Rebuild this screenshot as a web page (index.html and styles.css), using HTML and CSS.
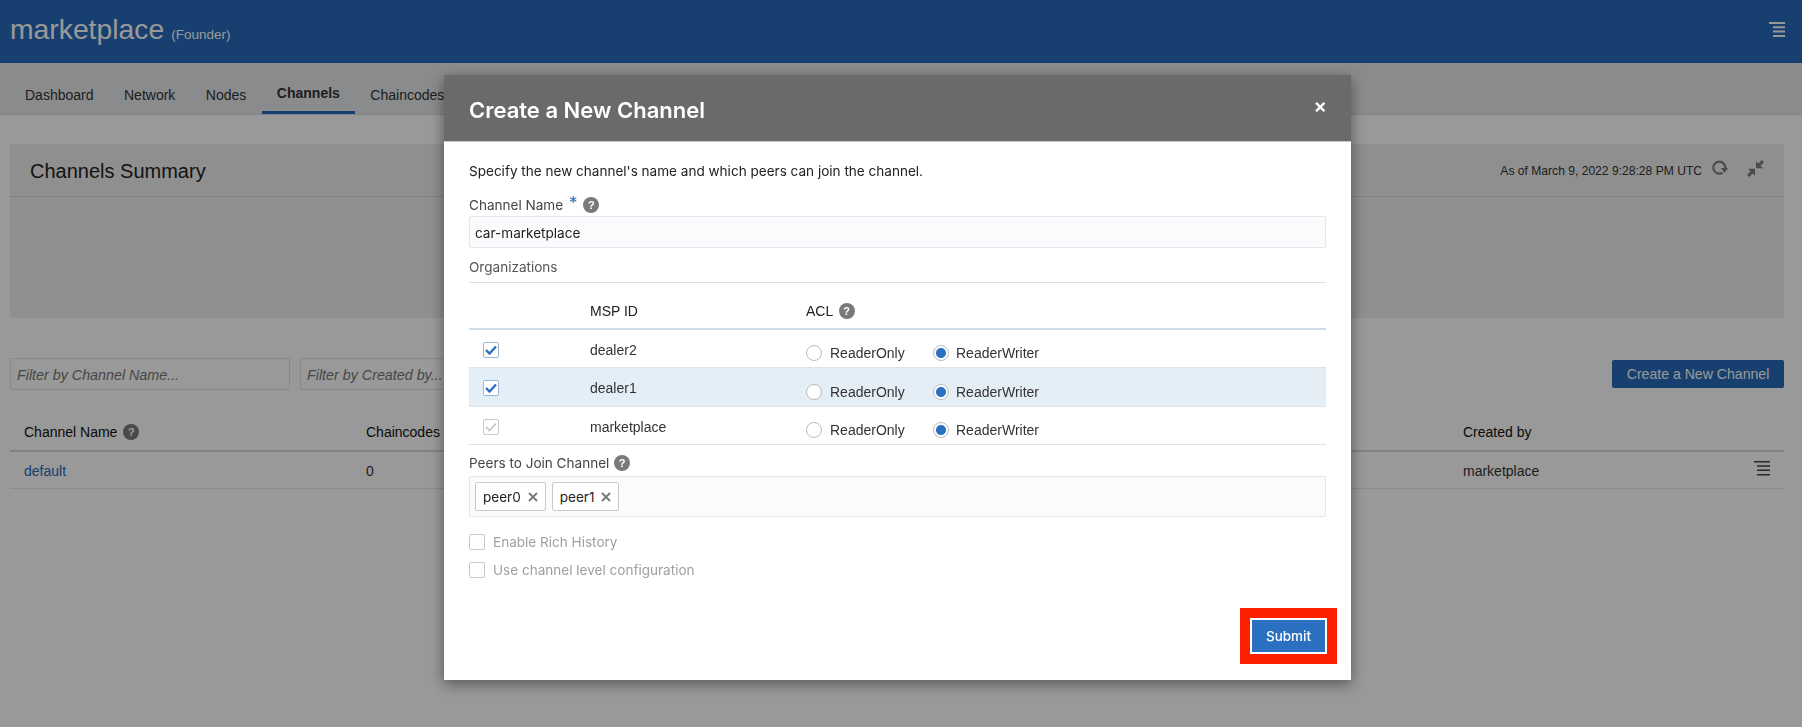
FILE: index.html
```html
<!DOCTYPE html>
<html lang="en">
<head>
  <meta charset="UTF-8">
  <title>Channels</title>
  <link rel="stylesheet" href="styles.css">
</head>
<body>
  <header class="topbar">
    <div class="brand"><span class="brand-name">marketplace</span><span class="brand-role">(Founder)</span></div>
    <svg class="menu-icon" width="16" height="15" viewBox="0 0 16 15"><path d="M0 0h16v2H0zM4 4.300h12v2H4zM4 8.600h12v2H4zM4 12.900h12v2H4z" fill="#fff"/></svg>
  </header>

  <nav class="tabs">
    <a class="tab">Dashboard</a>
    <a class="tab">Network</a>
    <a class="tab">Nodes</a>
    <a class="tab active">Channels</a>
    <a class="tab">Chaincodes</a>
  </nav>

  <main class="content">
    <section class="panel">
      <div class="panel-head">
        <h2>Channels Summary</h2>
        <div class="panel-tools">
          <span class="stamp">As of March 9, 2022 9:28:28 PM UTC</span>
          <svg width="17" height="17" viewBox="0 0 17 17"><path d="M14 9.500A6 6 0 1 0 11.500 12.700M3 3.200" fill="none" stroke="#7a7d82" stroke-width="2.200"/><path d="M17 8h-7l3.500 5z" fill="#7a7d82"/></svg>
          <svg class="tool-gap" width="17" height="17" viewBox="0 0 17 17"><path d="M14.800 0L17 2.200l-3.500 3.500L16 8.200H9V1.200l2.300 2.300zM2.200 17L0 14.800l3.500-3.500L1 8.800h7v7l-2.300-2.300z" fill="#7a7d82"/></svg>
        </div>
      </div>
    </section>

    <div class="filters">
      <div class="filter">Filter by Channel Name...</div>
      <div class="filter">Filter by Created by...</div>
      <button class="create-btn">Create a New Channel</button>
    </div>

    <div class="grid-row grid-head">
      <span>Channel Name <i class="help">?</i></span>
      <span>Chaincodes</span>
      <span>Created by</span>
    </div>
    <div class="grid-row grid-body">
      <a class="link">default</a>
      <span>0</span>
      <span>marketplace</span>
      <svg class="row-menu" width="16" height="15" viewBox="0 0 16 15"><path d="M0 0h16v1.500H0zM3 4.300h13v1.500H3zM3 8.600h13v1.500H3zM3 12.900h13v1.500H3z" fill="#444"/></svg>
    </div>
  </main>

  <div class="backdrop"></div>

  <div class="modal">
    <div class="modal-head">
      <h1>Create a New Channel</h1>
      <span class="close">&times;</span>
    </div>
    <div class="modal-body">
      <p class="intro">Specify the new channel's name and which peers can join the channel.</p>
      <label class="field-label">Channel Name <b class="req">*</b> <i class="help">?</i></label>
      <div class="text-input">car-marketplace</div>
      <div class="section-title">Organizations</div>

      <div class="org-row org-head">
        <span></span>
        <span>MSP ID</span>
        <span>ACL <i class="help">?</i></span>
      </div>
      <div class="org-row">
        <span class="check on"><svg width="12" height="10" viewBox="0 0 12 10"><path d="M1 5l3.500 3.500L11 1.500" fill="none" stroke="#2a6fc0" stroke-width="2.400"/></svg></span>
        <span class="msp">dealer2</span>
        <span class="acl">
          <span class="radio"></span><span class="radio-label">ReaderOnly</span>
          <span class="radio on"></span><span>ReaderWriter</span>
        </span>
      </div>
      <div class="org-row selected">
        <span class="check on"><svg width="12" height="10" viewBox="0 0 12 10"><path d="M1 5l3.500 3.500L11 1.500" fill="none" stroke="#2a6fc0" stroke-width="2.400"/></svg></span>
        <span class="msp">dealer1</span>
        <span class="acl">
          <span class="radio"></span><span class="radio-label">ReaderOnly</span>
          <span class="radio on"></span><span>ReaderWriter</span>
        </span>
      </div>
      <div class="org-row">
        <span class="check"><svg width="12" height="10" viewBox="0 0 12 10"><path d="M1 5l3.500 3.500L11 1.500" fill="none" stroke="#c4c4c4" stroke-width="1.600"/></svg></span>
        <span class="msp">marketplace</span>
        <span class="acl">
          <span class="radio"></span><span class="radio-label">ReaderOnly</span>
          <span class="radio on"></span><span>ReaderWriter</span>
        </span>
      </div>

      <label class="field-label peers-label">Peers to Join Channel <i class="help">?</i></label>
      <div class="tag-input">
        <span class="tag">peer0 <svg width="10" height="10" viewBox="0 0 10 10"><path d="M1 1l8 8M9 1l-8 8" stroke="#777" stroke-width="1.800"/></svg></span>
        <span class="tag">peer1 <svg width="10" height="10" viewBox="0 0 10 10"><path d="M1 1l8 8M9 1l-8 8" stroke="#777" stroke-width="1.800"/></svg></span>
      </div>

      <div class="option"><span class="check"></span>Enable Rich History</div>
      <div class="option"><span class="check"></span>Use channel level configuration</div>

      <div class="modal-foot">
        <span class="highlight"><button class="submit">Submit</button></span>
      </div>
    </div>
  </div>
</body>
</html>
```

FILE: styles.css
```css
* {
  box-sizing: border-box;
}
html, body {
  height: 727px;
  overflow: hidden;
}
body {
  margin: 0;
  background: #fff;
  color: #333;
  font-family: "Liberation Sans", Arial, sans-serif;
  font-size: 14px;
}

/* page behind the dialog */
.topbar {
  height: 63px;
  background: #2769b9;
  color: #fff;
  display: flex;
  justify-content: space-between;
  align-items: center;
  padding: 0 17px 4px 10px;
}
.brand-name {
  font-size: 28.300px;
}
.brand-role {
  font-size: 13.500px;
  margin-left: 7px;
}
.tabs {
  height: 52px;
  background: #e6e8eb;
  border-bottom: 1px solid #d3d9e0;
  padding-left: 9.750px;
  display: flex;
}
.tab {
  padding: 23px 15.250px 0;
  line-height: 18px;
  height: 51px;
  color: #333;
}
.tab.active {
  font-weight: bold;
  padding-top: 21px;
  border-bottom: 3px solid #2769b9;
}
.content {
  padding: 29px 18px 0 10px;
}
.panel {
  height: 174px;
  background: #eee;
}
.panel-head {
  height: 53px;
  border-bottom: 1px solid #d3d9e0;
  display: flex;
  justify-content: space-between;
  align-items: center;
  padding: 2px 20px 0;
}
.panel-head h2 {
  margin: 0;
  font-size: 20px;
  font-weight: normal;
  color: #222;
}
.panel-tools {
  display: flex;
  align-items: center;
  font-size: 12.100px;
}
.panel-tools svg {
  margin-left: 9px;
  margin-top: -5px;
}
.panel-tools .tool-gap {
  margin-left: 19px;
}
.filters {
  display: flex;
  align-items: center;
  margin-top: 40px;
  gap: 10px;
}
.filter {
  width: 280px;
  height: 32px;
  line-height: 32px;
  padding-left: 6px;
  border: 1px solid #dfe3e8;
  border-radius: 2px;
  font-size: 14.300px;
  font-style: italic;
  color: #777;
  white-space: nowrap;
}
.create-btn {
  margin-left: auto;
  width: 172px;
  height: 28px;
  background: #2769b9;
  color: #fff;
  border: 0;
  border-radius: 2px;
  font: 14.100px "Liberation Sans", Arial, sans-serif;
}
.grid-row {
  display: grid;
  grid-template-columns: 342px 1097px 1fr;
  padding-left: 14px;
  align-items: center;
  position: relative;
}
.grid-head {
  margin-top: 23px;
  height: 39px;
  border-bottom: 2px solid #d3d9e0;
  color: #111;
}
.grid-body {
  height: 37px;
  padding-top: 2px;
  border-bottom: 1px solid #e3e6ea;
}
.link {
  color: #2769b9;
}
.row-menu {
  position: absolute;
  right: 14px;
  top: 9px;
}

/* help bubble */
.help {
  display: inline-block;
  width: 16px;
  height: 16px;
  border-radius: 50%;
  background: #7a7a7c;
  color: #fff;
  font: bold 11px/16px "Liberation Sans", Arial, sans-serif;
  text-align: center;
  vertical-align: 1px;
  margin-left: 2px;
}

/* dialog */
.backdrop {
  position: fixed;
  inset: 0;
  background: rgba(0, 0, 0, 0.4);
}
.modal {
  position: fixed;
  left: 444px;
  top: 75px;
  width: 907px;
  height: 605px;
  background: #fff;
  box-shadow: 0 4px 14px rgba(0, 0, 0, 0.45);
  font-family: Inter, "Liberation Sans", sans-serif;
  font-size: 13.550px;
}
.modal-head {
  height: 67px;
  background: #6a6a6a;
  border-bottom: 1px solid #c9c9c9;
  color: #fff;
  display: flex;
  justify-content: space-between;
  align-items: center;
  padding: 4px 24px 0 25px;
}
.modal-head h1 {
  margin: 0;
  font-size: 22px;
  font-weight: 600;
}
.close {
  font-size: 20px;
  font-weight: 600;
  margin-top: -8px;
}
.modal-body {
  padding: 0 25px 0 25px;
}
.intro {
  margin: 20px 0 0;
  line-height: 18px;
  color: #222;
}
.field-label {
  display: block;
  margin-top: 14px;
  line-height: 18px;
  color: #444;
}
.field-label .help {
  margin-left: 0;
}
.req {
  color: #2769b9;
  font-weight: normal;
  font-size: 17px;
  vertical-align: 1px;
  margin: 0 2px;
}
.text-input {
  margin-top: 2px;
  height: 32px;
  line-height: 32px;
  padding-left: 5px;
  background: #fbfbfd;
  border: 1px solid #e4e6ea;
  border-radius: 2px;
  color: #222;
}
.section-title {
  margin-top: 10px;
  height: 25px;
  line-height: 18px;
  border-bottom: 1px solid #dedede;
  color: #555;
}
.org-row {
  display: grid;
  grid-template-columns: 121px 216px 1fr;
  height: 38px;
  align-items: center;
  border-bottom: 1px solid #dfe3e8;
  font-family: "Liberation Sans", Arial, sans-serif;
  font-size: 14px;
  color: #333;
}
.org-head {
  height: 47px;
  padding-top: 10px;
  border-bottom: 2px solid #cfdbe6;
  color: #222;
}
.org-row.selected {
  height: 39px;
  background: #e4eef7;
}
.org-row .check {
  margin: 2px 0 0 14px;
}
.msp {
  margin-top: 2px;
}
.check {
  display: inline-flex;
  align-items: center;
  justify-content: center;
  width: 16px;
  height: 16px;
  border: 1px solid #c8c8c8;
  border-radius: 2px;
  background: #fff;
}
.check.on {
  border-color: #9db8d6;
}
.acl {
  display: flex;
  align-items: center;
  margin-top: 9px;
}
.radio {
  width: 16px;
  height: 16px;
  border: 1px solid #bbb;
  border-radius: 50%;
  background: #fff;
  margin-right: 8px;
}
.radio-label {
  width: 94px;
  margin-right: 9px;
}
.radio.on {
  margin-right: 7px;
  background: radial-gradient(circle, #2a6fc0 0 4.500px, #fff 5.500px);
}
.peers-label {
  margin-top: 9px;
}
.peers-label .help {
  margin-left: 1px;
}
.tag-input {
  margin-top: 4px;
  height: 41px;
  display: flex;
  align-items: center;
  gap: 6px;
  padding-left: 5px;
  background: #fbfbfd;
  border: 1px solid #e4e6ea;
  border-radius: 2px;
}
.tag {
  height: 29px;
  display: flex;
  align-items: center;
  gap: 7px;
  padding: 1px 7px 0;
  background: #fff;
  border: 1px solid #c9c9c9;
  border-radius: 2px;
  color: #222;
}
.option {
  display: flex;
  align-items: center;
  gap: 8px;
  height: 28px;
  color: #a0a0a0;
}
.tag-input + .option {
  margin-top: 11px;
}
.modal-foot {
  display: flex;
  justify-content: flex-end;
  margin: 24px -11px 0 0;
}
.highlight {
  background: #fb2000;
  padding: 10px;
  display: block;
}
.submit {
  display: block;
  width: 77px;
  height: 36px;
  background: #2a6fc0;
  color: #fff;
  border: 2px solid #fff;
  border-radius: 0;
  font: 500 13.500px Inter, "Liberation Sans", sans-serif;
}
```
